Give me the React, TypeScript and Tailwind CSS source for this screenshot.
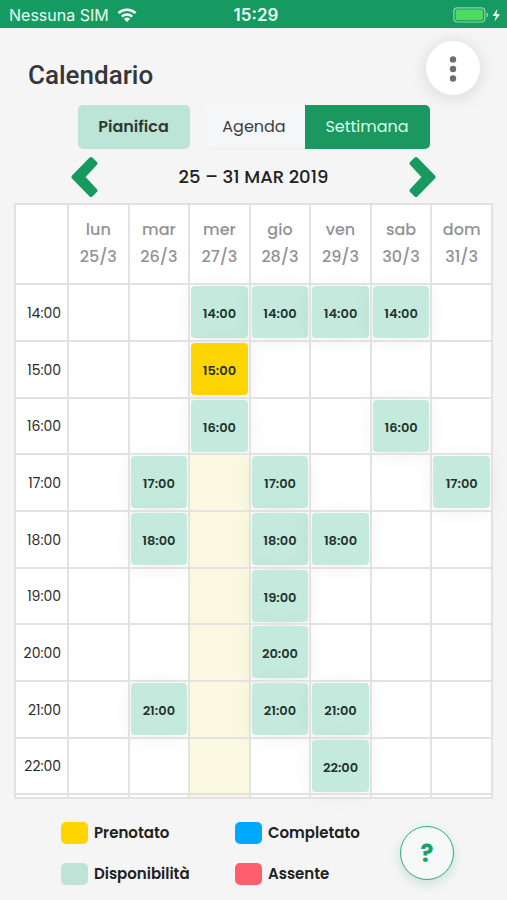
import React from "react";

type Status = "free" | "booked";

const days = [
  { name: "lun", date: "25/3" },
  { name: "mar", date: "26/3" },
  { name: "mer", date: "27/3" },
  { name: "gio", date: "28/3" },
  { name: "ven", date: "29/3" },
  { name: "sab", date: "30/3" },
  { name: "dom", date: "31/3" },
];

const TODAY = 2;
// First row of today's column that is still highlighted.
const TODAY_FROM = 3;

// Each row lists the day indexes that carry a slot.
const rows: { time: string; slots: Record<number, Status> }[] = [
  { time: "14:00", slots: { 2: "free", 3: "free", 4: "free", 5: "free" } },
  { time: "15:00", slots: { 2: "booked" } },
  { time: "16:00", slots: { 2: "free", 5: "free" } },
  { time: "17:00", slots: { 1: "free", 3: "free", 6: "free" } },
  { time: "18:00", slots: { 1: "free", 3: "free", 4: "free" } },
  { time: "19:00", slots: { 3: "free" } },
  { time: "20:00", slots: { 3: "free" } },
  { time: "21:00", slots: { 1: "free", 3: "free", 4: "free" } },
  { time: "22:00", slots: { 4: "free" } },
];

const legend = [
  { label: "Prenotato", color: "bg-[#ffd500]" },
  { label: "Completato", color: "bg-[#00a8ff]" },
  { label: "Disponibilità", color: "bg-[#bfe4d7]" },
  { label: "Assente", color: "bg-[#ff5f6d]" },
];

function StatusBar() {
  return (
    <div className="grid h-7 grid-cols-3 items-center bg-[#159a62] pr-1 pl-[9px] font-['Inter',sans-serif] text-[#e9fbf2]">
      <div className="flex items-center gap-2 pt-0.5">
        <span className="text-base leading-5 whitespace-nowrap">Nessuna SIM</span>
        <svg width="20" height="15" viewBox="0 0 20 15" fill="none" aria-label="Wi-Fi">
          <path d="M1.5 5.2a12.3 12.3 0 0 1 17 0" stroke="white" strokeWidth="2.5" />
          <path d="M4.8 8.6a7.6 7.6 0 0 1 10.4 0" stroke="white" strokeWidth="2.4" />
          <path d="M10 14 6.9 11a4.6 4.6 0 0 1 6.2 0Z" fill="white" />
        </svg>
      </div>
      <div className="pt-0.5 text-center text-[17px] leading-5 font-semibold">15:29</div>
      <svg className="mt-px justify-self-end" width="50" height="16" viewBox="0 0 50 16" aria-label="Batteria in carica">
        <rect x="0.8" y="0.8" width="31" height="14.2" rx="3.5" fill="none" stroke="#8fd3b4" strokeWidth="1.2" />
        <rect x="2.6" y="2.6" width="27.4" height="10.6" rx="1.8" fill="#4cdb5c" />
        <path d="M33.5 5.5c2.2.6 2.2 4.4 0 5Z" fill="#8fd3b4" />
        <path d="M44.5 1.8 39.5 9h3.5l-1.5 5.5L47 7.2h-3.6Z" fill="white" />
      </svg>
    </div>
  );
}

function Chevron({ flip = false }: { flip?: boolean }) {
  return (
    <svg
      className={flip ? "rotate-180" : ""}
      width="27"
      height="42"
      viewBox="0 0 27 42"
      fill="#179a60"
      stroke="#179a60"
      strokeWidth="4"
      strokeLinejoin="round"
      aria-hidden="true"
    >
      <path d="M20 3 24.5 7.5 12 21 24.5 34.5 20 39 2.5 21Z" />
    </svg>
  );
}

function Slot({ time, status }: { time: string; status: Status }) {
  return (
    <button
      type="button"
      className={`block h-[52px] w-full rounded-[4px] pt-1 text-[13px] leading-5 font-semibold text-[#23332d] shadow-[0_2px_20px_rgba(0,0,0,0.07)] ${
        status === "booked" ? "bg-[#ffd500]" : "bg-[#c3eadd]"
      }`}
    >
      {time}
    </button>
  );
}

function Calendar() {
  return (
    <table className="w-full table-fixed border-collapse bg-white">
      <thead>
        <tr className="h-20">
          <th className="w-[53px] border-2 border-[#e2e2e2]" aria-label="Ora" />
          {days.map((d) => (
            <th
              key={d.name}
              scope="col"
              className="border-2 border-[#e2e2e2] p-0 pb-0.5 text-base leading-[27px] font-medium text-[#929397]"
            >
              {d.name}
              <br />
              {d.date}
            </th>
          ))}
        </tr>
      </thead>
      <tbody>
        {rows.map((r, row) => (
          <tr key={r.time} className="h-[57px] nth-[3n]:h-14">
            <th
              scope="row"
              className="border-2 border-[#e2e2e2] p-0 pr-1.5 text-right text-[14px] leading-5 font-normal text-[#2b2b2b]"
            >
              {r.time}
            </th>
            {days.map((d, i) => (
              <td
                key={d.name}
                className={`border-2 border-[#e2e2e2] p-px align-top ${
                  i === TODAY && row >= TODAY_FROM ? "bg-[#fbf8e2]" : ""
                }`}
              >
                {r.slots[i] && <Slot time={r.time} status={r.slots[i]} />}
              </td>
            ))}
          </tr>
        ))}
        <tr className="h-1" aria-hidden="true">
          <td className="border-2 border-[#e2e2e2] p-0" />
          {days.map((d, i) => (
            <td
              key={d.name}
              className={`border-2 border-[#e2e2e2] p-0 ${i === TODAY ? "bg-[#fbf8e2]" : ""}`}
            />
          ))}
        </tr>
      </tbody>
    </table>
  );
}

export default function App() {
  return (
    <div className="min-h-screen bg-[#f5f5f5] font-['Poppins','Inter',sans-serif]">
      <StatusBar />
      <header className="flex h-[77px] items-start justify-between pr-[27px] pl-7">
        <h1 className="pt-[31px] font-['Roboto',sans-serif] text-[26px] leading-8 font-medium text-[#35363a]">
          Calendario
        </h1>
        <button
          type="button"
          aria-label="Menu"
          className="mt-[13px] flex size-[54px] items-center justify-center rounded-full bg-white shadow-[0_2px_18px_rgba(0,0,0,0.13)]"
        >
          <svg width="8" height="28" viewBox="0 0 8 28" fill="#6d6d6d" aria-hidden="true">
            <circle cx="4" cy="5.5" r="3.2" />
            <circle cx="4" cy="15" r="3.2" />
            <circle cx="4" cy="24.5" r="3.2" />
          </svg>
        </button>
      </header>

      <main>
        <div className="flex h-11 justify-center gap-[14px]">
          <button
            type="button"
            className="w-28 rounded-[5px] bg-[#bde5d7] text-base font-semibold text-[#2c3a35]"
          >
            Pianifica
          </button>
          <div className="flex">
            <button
              type="button"
              className="w-[101px] rounded-l-[5px] border-b border-[#ededf0] bg-[#f5f6f8] text-base text-[#3c3e42]"
            >
              Agenda
            </button>
            <button
              type="button"
              className="w-[125px] rounded-r-[5px] bg-[#1b985f] text-base text-[#dcfbec]"
            >
              Settimana
            </button>
          </div>
        </div>

        <div className="flex h-[54px] items-center justify-between px-[71px] pt-0.5">
          <button type="button" aria-label="Settimana precedente">
            <Chevron />
          </button>
          <h2 className="text-[18px] leading-6 font-medium text-[#1f2124]">25 – 31 MAR 2019</h2>
          <button type="button" aria-label="Settimana successiva">
            <Chevron flip />
          </button>
        </div>

        <div className="px-[14px]">
          <Calendar />
        </div>
      </main>

      <footer className="flex items-start justify-between pt-[22px] pr-[53px] pl-[61px]">
        <ul className="grid grid-cols-[174px_auto] gap-y-[17px]">
          {legend.map((l) => (
            <li key={l.label} className="flex items-center gap-[6px]">
              <span className={`h-[22px] w-[27px] rounded-[5px] ${l.color}`} />
              <span className="text-[15px] leading-6 font-semibold text-[#212121]">{l.label}</span>
            </li>
          ))}
        </ul>
        <button
          type="button"
          aria-label="Aiuto"
          className="mt-[5px] size-[54px] rounded-full border border-[#2cae7c] bg-[#f7f8f8] pt-0.5 text-[24px] leading-8 font-bold text-[#12a26c] shadow-[0_4px_12px_rgba(27,152,95,0.2)]"
        >
          ?
        </button>
      </footer>
    </div>
  );
}
